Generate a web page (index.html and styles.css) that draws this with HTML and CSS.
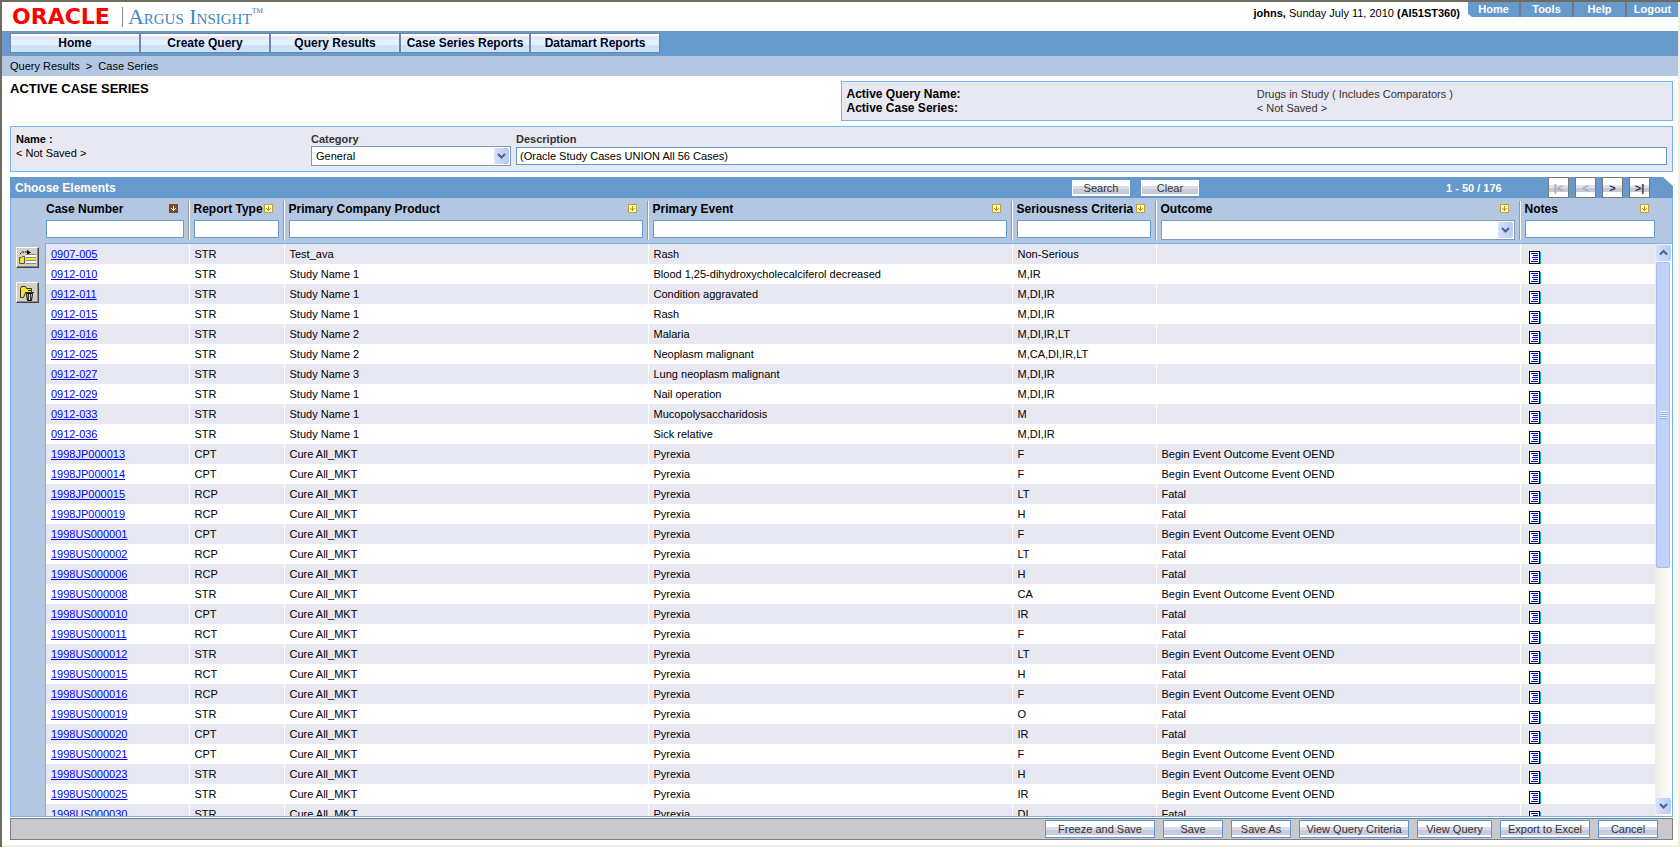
FILE: index.html
```html
<!DOCTYPE html>
<html lang="en">
<head>
  <meta charset="UTF-8">
  <meta name="viewport" content="width=device-width, initial-scale=1.0">
  <title>Argus Insight - Active Case Series</title>
  <link rel="stylesheet" href="styles.css">
</head>
<body>
  <svg class="defs" width="0" height="0">
    <symbol id="sort" viewBox="0 0 9 9">
      <rect x="0.5" y="0.5" width="8" height="8" fill="#ffffa8" stroke="#c0a040"/>
      <path d="M4 2h1v5h-1zM2 4h1v1h-1zM3 5h3v1h-3zM6 4h1v1h-1z" fill="#b09030"/>
    </symbol>
    <symbol id="sorted" viewBox="0 0 9 9">
      <rect width="9" height="9" fill="#7b4a1e"/>
      <path d="M4 2h1v5h-1zM2 4h1v1h-1zM3 5h3v1h-3zM6 4h1v1h-1z" fill="#fff"/>
    </symbol>
    <symbol id="note" viewBox="0 0 12 13">
      <rect x="10" y="1" width="2" height="12" fill="#00a8e8"/>
      <rect x="0.5" y="0.5" width="10" height="12" fill="#fff" stroke="#000"/>
      <path d="M2 2.500h7M4 4.500h5M3 6.500h6M4 8.500h5M2 10.500h7" stroke="#0000e0"/>
    </symbol>
  </svg>

  <header class="top">
    <div class="logo">
      <span class="oracle">ORACLE</span>
      <span class="product">Argus Insight<sup>™</sup></span>
    </div>
    <div class="user"><b>johns,</b> Sunday July 11, 2010 <b>(AI51ST360)</b></div>
    <nav class="tabs">
      <a href="#">Home</a>
      <a href="#">Tools</a>
      <a href="#">Help</a>
      <a href="#">Logout</a>
    </nav>
  </header>

  <nav class="menu">
    <button type="button">Home</button>
    <button type="button">Create Query</button>
    <button type="button">Query Results</button>
    <button type="button">Case Series Reports</button>
    <button type="button">Datamart Reports</button>
  </nav>
  <div class="crumbs">Query Results&nbsp; &gt;&nbsp; Case Series</div>

  <main>
    <section class="heading">
      <h1>ACTIVE CASE SERIES</h1>
      <dl class="active">
        <dt>Active Query Name:</dt><dd>Drugs in Study ( Includes Comparators )</dd>
        <dt>Active Case Series:</dt><dd>&lt; Not Saved &gt;</dd>
      </dl>
    </section>

    <section class="details">
      <div class="name"><b>Name :</b><br>&lt; Not Saved &gt;</div>
      <div class="field category">
        <label for="category">Category</label>
        <div class="select">
          <select id="category"><option>General</option></select>
          <svg class="arrow" viewBox="0 0 15 16"><path d="M4 6l3.500 3.500L11 6" /></svg>
        </div>
      </div>
      <div class="field description">
        <label for="description">Description</label>
        <input type="text" id="description" value="(Oracle Study Cases UNION All 56 Cases)">
      </div>
    </section>

    <section class="grid">
      <div class="bar">
        <h2>Choose Elements</h2>
        <button type="button" class="small">Search</button>
        <button type="button" class="small">Clear</button>
        <span class="count">1 - 50 / 176</span>
        <div class="pager">
          <button type="button" disabled>|&lt;</button>
          <button type="button" disabled>&lt;</button>
          <button type="button">&gt;</button>
          <button type="button">&gt;|</button>
        </div>
      </div>
      <div class="inner">
        <div class="tools">
          <button type="button" aria-label="Add cases">
            <svg viewBox="0 0 18 16">
              <path d="M2 4l2-2h7" fill="none" stroke="#000" stroke-dasharray="2 1"/>
              <path d="M9 0l4 2.500L9 5z"/>
              <path d="M8 4h10v10H8z" fill="#fff"/>
              <path d="M8 4.500h10M8 7.500h10M8 10.500h10M8 13.500h10" stroke="#888"/>
              <path d="M8 8h10v2H8z" fill="#f5e820"/>
              <path d="M1.500 7.500h2l1-1h2v7h-5z" fill="#f5e820" stroke="#555"/>
            </svg>
          </button>
          <button type="button" aria-label="Delete cases">
            <svg viewBox="0 0 18 16">
              <path d="M2.500 12.500v-9l1-2h4l1 2h5v4h-6l-2 5z" fill="#f5e820" stroke="#333"/>
              <path d="M8.500 8.500h6l-1 7h-4z" fill="#ddd" stroke="#000"/>
              <path d="M7 7.500h9M10 5.500h3M10.500 9v6M12.500 9v6" fill="none" stroke="#333"/>
            </svg>
          </button>
        </div>
        <div class="data">
          <table class="head">
            <colgroup><col class="c1"><col class="c2"><col><col><col class="c5"><col><col class="c7"></colgroup>
            <thead>
              <tr>
                <th><div class="th"><label for="f1">Case Number</label><svg><use href="#sorted"/></svg></div><input type="text" id="f1"></th>
                <th><div class="th"><label for="f2">Report Type</label><svg><use href="#sort"/></svg></div><input type="text" id="f2"></th>
                <th><div class="th"><label for="f3">Primary Company Product</label><svg><use href="#sort"/></svg></div><input type="text" id="f3"></th>
                <th><div class="th"><label for="f4">Primary Event</label><svg><use href="#sort"/></svg></div><input type="text" id="f4"></th>
                <th><div class="th"><label for="f5">Seriousness Criteria</label><svg><use href="#sort"/></svg></div><input type="text" id="f5"></th>
                <th><div class="th"><label for="f6">Outcome</label><svg><use href="#sort"/></svg></div>
                  <div class="select">
                    <select id="f6"><option></option></select>
                    <svg class="arrow" viewBox="0 0 15 16"><path d="M4 6l3.500 3.500L11 6" /></svg>
                  </div>
                </th>
                <th><div class="th"><label for="f7">Notes</label><svg><use href="#sort"/></svg></div><input type="text" id="f7"></th>
              </tr>
            </thead>
          </table>
          <div class="scroll">
            <div class="rows">
              <table class="cases">
                <colgroup><col class="c1"><col class="c2"><col><col><col class="c5"><col><col class="c7"></colgroup>
                <tbody id="cases"></tbody>
              </table>
            </div>
            <div class="scrollbar">
              <svg class="arrow" viewBox="0 0 15 16"><path d="M4 9.500L7.500 6 11 9.500" /></svg>
              <div class="track"><div class="thumb"><i></i></div></div>
              <svg class="arrow" viewBox="0 0 15 16"><path d="M4 6l3.500 3.500L11 6" /></svg>
            </div>
          </div>
        </div>
      </div>
    </section>

    <footer>
      <button type="button" class="w110">Freeze and Save</button>
      <button type="button" class="w60">Save</button>
      <button type="button" class="w60">Save As</button>
      <button type="button" class="w110">View Query Criteria</button>
      <button type="button" class="w75">View Query</button>
      <button type="button" class="w90">Export to Excel</button>
      <button type="button" class="w60">Cancel</button>
    </footer>
  </main>

  <script>
    const OEND = "Begin Event Outcome Event OEND";
    const cure = "Cure All_MKT";
    const cases = [
      ["0907-005", "STR", "Test_ava", "Rash", "Non-Serious", ""],
      ["0912-010", "STR", "Study Name 1", "Blood 1,25-dihydroxycholecalciferol decreased", "M,IR", ""],
      ["0912-011", "STR", "Study Name 1", "Condition aggravated", "M,DI,IR", ""],
      ["0912-015", "STR", "Study Name 1", "Rash", "M,DI,IR", ""],
      ["0912-016", "STR", "Study Name 2", "Malaria", "M,DI,IR,LT", ""],
      ["0912-025", "STR", "Study Name 2", "Neoplasm malignant", "M,CA,DI,IR,LT", ""],
      ["0912-027", "STR", "Study Name 3", "Lung neoplasm malignant", "M,DI,IR", ""],
      ["0912-029", "STR", "Study Name 1", "Nail operation", "M,DI,IR", ""],
      ["0912-033", "STR", "Study Name 1", "Mucopolysaccharidosis", "M", ""],
      ["0912-036", "STR", "Study Name 1", "Sick relative", "M,DI,IR", ""],
      ["1998JP000013", "CPT", cure, "Pyrexia", "F", OEND],
      ["1998JP000014", "CPT", cure, "Pyrexia", "F", OEND],
      ["1998JP000015", "RCP", cure, "Pyrexia", "LT", "Fatal"],
      ["1998JP000019", "RCP", cure, "Pyrexia", "H", "Fatal"],
      ["1998US000001", "CPT", cure, "Pyrexia", "F", OEND],
      ["1998US000002", "RCP", cure, "Pyrexia", "LT", "Fatal"],
      ["1998US000006", "RCP", cure, "Pyrexia", "H", "Fatal"],
      ["1998US000008", "STR", cure, "Pyrexia", "CA", OEND],
      ["1998US000010", "CPT", cure, "Pyrexia", "IR", "Fatal"],
      ["1998US000011", "RCT", cure, "Pyrexia", "F", "Fatal"],
      ["1998US000012", "STR", cure, "Pyrexia", "LT", OEND],
      ["1998US000015", "RCT", cure, "Pyrexia", "H", "Fatal"],
      ["1998US000016", "RCP", cure, "Pyrexia", "F", OEND],
      ["1998US000019", "STR", cure, "Pyrexia", "O", "Fatal"],
      ["1998US000020", "CPT", cure, "Pyrexia", "IR", "Fatal"],
      ["1998US000021", "CPT", cure, "Pyrexia", "F", OEND],
      ["1998US000023", "STR", cure, "Pyrexia", "H", OEND],
      ["1998US000025", "STR", cure, "Pyrexia", "IR", OEND],
      ["1998US000030", "STR", cure, "Pyrexia", "DI", "Fatal"]
    ];

    document.getElementById('cases').innerHTML = cases.map(([id, ...rest]) => `
      <tr>
        <td><a href="#">${id}</a></td>
        ${rest.map(v => `<td>${v}</td>`).join('')}
        <td><svg class="note"><use href="#note"/></svg></td>
      </tr>`).join('');
  </script>
</body>
</html>
```
FILE: styles.css
```css
* {
  box-sizing: border-box;
}
body {
  display: flex;
  flex-direction: column;
  height: 100vh;
  margin: 0;
  border: solid #6f6c5f;
  border-width: 2px 0 0 2px;
  box-shadow: inset -2px -2px 0 #f1efe2;
  padding: 0 2px 2px 0;
  background: #fff;
  font: 11px/14px "Liberation Sans", Arial, sans-serif;
  color: #000;
}
button, input, select {
  font: inherit;
  color: inherit;
  border-radius: 0;
  margin: 0;
}
h1, h2, dl, dd {
  margin: 0;
}
.defs {
  position: absolute;
}

.top {
  display: flex;
  align-items: flex-start;
  height: 29px;
}
.logo {
  display: flex;
  align-items: center;
  flex: 1;
  height: 29px;
  padding-left: 10px;
}
.oracle {
  font: bold 22px/20px "DejaVu Sans", sans-serif;
  color: #f00;
  padding-right: 12px;
  border-right: 1px solid #888;
}
.product {
  font: 22px/20px "Liberation Serif", serif;
  font-variant: small-caps;
  color: #3f86c6;
  padding-left: 5px;
}
.product sup {
  font-size: 12px;
  line-height: 0;
}
.user {
  padding: 4px 8px 0 0;
}
.tabs {
  display: flex;
  background: #6699cc;
  clip-path: polygon(0 0, 100% 0, 100% 100%, 4px 100%, 0 12px);
}
.tabs a {
  width: 53px;
  height: 15px;
  border-left: 2px solid #778;
  color: #fff;
  font-weight: bold;
  text-align: center;
  text-decoration: none;
}
.tabs a:first-child {
  width: 51px;
  border-left: 0;
}

.menu {
  display: flex;
  flex: none;
  height: 25px;
  padding: 2px 8px;
  background: #6699cc;
}
.menu button {
  width: 130px;
  height: 20px;
  padding: 0;
  border: 1px solid #7585a5;
  background: linear-gradient(#fff 2px, #e8e8f2 2px 6px, #def4fc 6px 11px, #d8dff5 11px 13px, #cce2f6 13px);
  font-size: 12px;
  font-weight: bold;
  color: #000020;
}
.crumbs {
  flex: none;
  height: 20px;
  padding: 3px 8px;
  background: #b3c7e3;
}

main {
  display: flex;
  flex-direction: column;
  flex: 1;
  min-height: 0;
  padding: 5px 5px 5px 8px;
}
.heading {
  display: flex;
  gap: 10px;
  flex: none;
}
h1 {
  flex: 1;
  font-size: 13px;
  line-height: 16px;
}
.active {
  display: grid;
  grid-template-columns: 1fr 1fr;
  flex: 1;
  padding: 5px;
  border: 1px solid #74b4f6;
  background: #e8e8f2;
  color: #333;
  height: 40px;
}
.active dt {
  font-size: 12px;
  font-weight: bold;
  color: #000;
}

.details {
  display: flex;
  gap: 5px;
  flex: none;
  height: 46px;
  margin: 5px 0;
  padding: 5px;
  border: 1px solid #74b4f6;
  background: #e8e8f2;
}
.name {
  width: 290px;
}
.field {
  display: flex;
  flex-direction: column;
}
.field label {
  font-weight: bold;
  color: #333;
}
.category {
  width: 200px;
}
.description {
  flex: 1;
}
.description input {
  margin-top: 1px;
}
input, select {
  display: block;
  width: 100%;
  height: 18px;
  padding: 0 3px;
  border: 1px solid #6699cc;
  background: #fff;
}
.select {
  position: relative;
}
select {
  height: 20px;
  padding: 0 4px;
  border-color: #7f9db9;
  appearance: none;
}
.arrow {
  display: block;
  width: 15px;
  height: 16px;
  border-radius: 2px;
  background: linear-gradient(90deg, #d5e0fc, #b8cbf6);
}
.arrow path {
  fill: none;
  stroke: #4d6185;
  stroke-width: 2;
}
.select .arrow {
  position: absolute;
  top: 2px;
  right: 2px;
}

.grid {
  display: flex;
  flex-direction: column;
  flex: 1;
  min-height: 0;
}
.bar {
  display: flex;
  align-items: center;
  flex: none;
  height: 21px;
  padding: 0 23px 0 5px;
  background: #6699cc;
  clip-path: polygon(0 0, calc(100% - 10px) 0, 100% 9px, 100% 100%, 0 100%);
  color: #fff;
}
h2 {
  flex: 1;
  font-size: 12px;
}
.bar .small {
  width: 58px;
  height: 16px;
  margin-right: 11px;
  border-color: #fff;
}
.count {
  width: 102px;
  margin-left: 236px;
  font-weight: bold;
}
.pager {
  display: flex;
  gap: 6px;
}
.pager button {
  width: 21px;
  height: 21px;
  padding: 0;
  border: 1px solid #777;
  background: linear-gradient(#fff 7px, #e0e0ee 7px 10px, #c8c8da 10px 14px, #fff 14px);
  font-weight: bold;
  color: #333;
}
.pager button:disabled {
  color: #aaa;
}
.small, footer button {
  padding: 0;
  border: 1px solid #5b97cf;
  background: linear-gradient(#fff 0 38%, #dcdcea 38% 55%, #cacadd 55% 90%, #fff 90%);
  color: #333;
}

.inner {
  display: flex;
  flex: 1;
  min-height: 0;
  border: 1px solid #74b4f6;
  border-top: 0;
  background: #b3c7e3;
}
.tools {
  display: flex;
  flex-direction: column;
  gap: 14px;
  width: 34px;
  padding: 49px 0 0 5px;
}
.tools button {
  width: 23px;
  height: 21px;
  padding: 1px;
  border: 1px solid;
  border-color: #fff #444 #444 #fff;
  box-shadow: inset -1px -1px 0 #888;
  background: #d4d0c8;
}
.tools svg {
  display: block;
  width: 18px;
  height: 16px;
}
.data {
  display: flex;
  flex-direction: column;
  flex: 1;
  min-width: 0;
}
table {
  width: 100%;
  table-layout: fixed;
  border-collapse: collapse;
}
.head {
  flex: none;
  width: calc(100% - 18px);
  margin: 3px 0 3px 1px;
}
.c1 { width: 143px; }
.c2 { width: 95px; }
.c5 { width: 144px; }
.c7 { width: 135px; }
th {
  height: 38px;
  padding: 0 5px 0 4px;
  border-left: 1px solid #fff;
  box-shadow: -1px 0 0 #999;
  vertical-align: top;
  text-align: left;
}
th:first-child {
  padding-left: 0;
  border: 0;
  box-shadow: none;
}
th:last-child {
  padding-right: 0;
}
.th {
  display: flex;
  justify-content: space-between;
  align-items: center;
  height: 19px;
  padding: 0 6px 4px 0;
  font-size: 12px;
  white-space: nowrap;
}
.th svg {
  flex: none;
  width: 9px;
  height: 9px;
}
.scroll {
  display: flex;
  flex: 1;
  min-height: 0;
  border: solid #74b4f6;
  border-width: 1px 0 0 1px;
  background: #fff;
}
.rows {
  flex: 1;
  min-width: 0;
  overflow: hidden;
}
.cases tr:nth-child(odd) {
  background: #e8e8f2;
}
td {
  height: 20px;
  padding: 0 5px;
  border-left: 1px solid #fff;
  white-space: nowrap;
}
td:first-child {
  border: 0;
}
td:last-child {
  padding-left: 8px;
}
td a {
  color: #00f;
}
.note {
  display: block;
  width: 12px;
  height: 13px;
  margin-top: 7px;
}
.scrollbar {
  display: flex;
  flex-direction: column;
  width: 17px;
  padding: 1px 0 2px 1px;
  background: linear-gradient(90deg, #eeede5, #fff);
}
.track {
  flex: 1;
}
.thumb {
  display: flex;
  align-items: center;
  justify-content: center;
  width: 14px;
  height: 57%;
  margin-top: 1px;
  border: 1px solid #a8bdf0;
  border-radius: 2px;
  background: #c1d3fb;
}
.thumb i {
  width: 7px;
  height: 8px;
  background: repeating-linear-gradient(#eef4fe 0 1px, #8cb0f8 1px 2px);
}

footer {
  display: flex;
  align-items: center;
  justify-content: flex-end;
  gap: 8px;
  flex: none;
  height: 22px;
  margin-top: 1px;
  padding-right: 14px;
  border: 1px solid #808080;
  background: #c9c9cb;
}
footer button {
  height: 18px;
}
.w60 { width: 60px; }
.w75 { width: 75px; }
.w90 { width: 90px; }
.w110 { width: 110px; }
```
